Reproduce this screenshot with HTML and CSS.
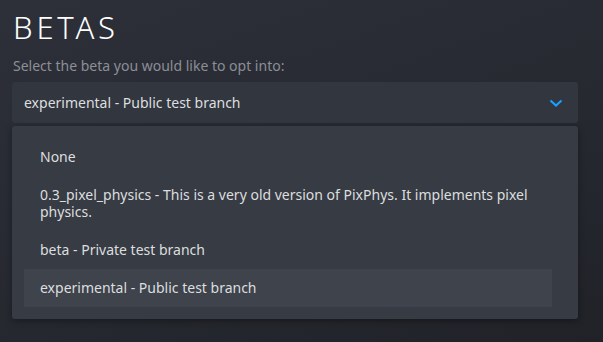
FILE: index.html
```html
<!DOCTYPE html>
<html lang="en">
<head>
    <meta charset="UTF-8">
    <title>Betas</title>
    <link rel="stylesheet" href="styles.css">
</head>
<body>
    <h1 class="titulo">BETAS</h1>
    <div class="subtitulo">Select the beta you would like to opt into:</div>

    <div class="selector">
        <span>experimental - Public test branch</span>
        <svg class="flecha" width="14" height="8" viewBox="0 0 14 8">
            <path d="M1.5 1.5 L7 6.5 L12.5 1.5" fill="none" stroke="#1a9fff" stroke-width="2.2"/>
        </svg>
    </div>

    <div class="lista">
        <div class="opcion">None</div>
        <div class="opcion">0.3_pixel_physics - This is a very old version of PixPhys. It implements pixel physics.</div>
        <div class="opcion">beta - Private test branch</div>
        <div class="opcion activa">experimental - Public test branch</div>
    </div>
</body>
</html>
```

FILE: styles.css
```css
body {
    margin: 0;
    padding: 9px 25px 0 12px;
    height: 342px;
    box-sizing: border-box;
    font-family: "Noto Sans", Arial, sans-serif;
    background: linear-gradient(160deg, #2d3039 0%, #262930 55%, #202228 100%);
    color: #dcdedf;
    overflow: hidden;
}

.titulo {
    font-size: 31px;
    font-weight: 300;
    letter-spacing: 3.8px;
    line-height: 36px;
    margin: 0 0 0 1px;
    color: #ffffff;
}

.subtitulo {
    font-size: 14px;
    color: #8b8f96;
    margin: 12px 0 0 1px;
    line-height: 18px;
}

.selector {
    margin-top: 7px;
    height: 41px;
    background-color: #32363f;
    border-radius: 3px;
    display: flex;
    align-items: center;
    justify-content: space-between;
    padding: 0 15px 0 12px;
    font-size: 14px;
}

.flecha {
    display: block;
}

.lista {
    margin-top: 3px;
    background-color: #373b44;
    border-radius: 3px;
    padding: 12px 26px 12px 12px;
    box-shadow: 0 2px 6px rgba(0, 0, 0, 0.35);
}

.opcion {
    font-size: 14px;
    line-height: 17px;
    padding: 10px 16px 11px 16px;
}

.opcion.activa {
    background-color: #3e434c;
}
```
